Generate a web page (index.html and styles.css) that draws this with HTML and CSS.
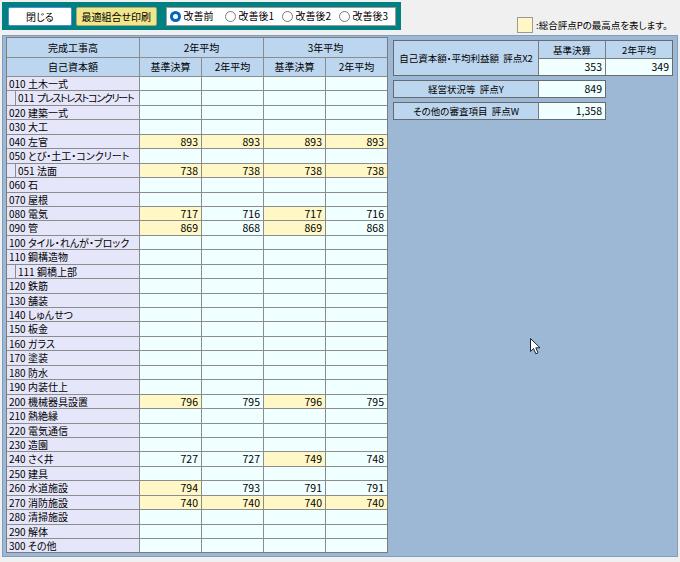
FILE: index.html
```html
<!DOCTYPE html>
<html lang="ja">
<head>
<meta charset="utf-8">
<title>完成工事高</title>
<link rel="stylesheet" href="styles.css">
</head>
<body>
<div class="app">
  <div class="top">
    <div class="toolbar">
      <button class="btn btn-close">閉じる</button>
      <button class="btn btn-print">最適組合せ印刷</button>
      <div class="radios">
        <span class="radio"><span class="dot on"></span>改善前</span>
        <span class="radio"><span class="dot"></span>改善後1</span>
        <span class="radio"><span class="dot"></span>改善後2</span>
        <span class="radio"><span class="dot"></span>改善後3</span>
      </div>
    </div>
    <div class="legend"><span class="swatch"></span><span class="legend-text">:総合評点Pの最高点を表します。</span></div>
  </div>

  <div class="panel">
    <div class="grid">
      <div class="h">完成工事高</div>
      <div class="h span2">2年平均</div>
      <div class="h span2">3年平均</div>
      <div class="h">自己資本額</div>
      <div class="h">基準決算</div>
      <div class="h">2年平均</div>
      <div class="h">基準決算</div>
      <div class="h">2年平均</div>

      <div class="lb">010 土木一式</div><div class="v"></div><div class="v"></div><div class="v"></div><div class="v"></div>
      <div class="lb sub"><span class="box">011 <span class="tight">プレストレストコンクリート</span></span></div><div class="v"></div><div class="v"></div><div class="v"></div><div class="v"></div>
      <div class="lb">020 建築一式</div><div class="v"></div><div class="v"></div><div class="v"></div><div class="v"></div>
      <div class="lb">030 大工</div><div class="v"></div><div class="v"></div><div class="v"></div><div class="v"></div>
      <div class="lb">040 左官</div><div class="v y">893</div><div class="v y">893</div><div class="v y">893</div><div class="v y">893</div>
      <div class="lb">050 とび・土工・コンクリート</div><div class="v"></div><div class="v"></div><div class="v"></div><div class="v"></div>
      <div class="lb sub"><span class="box">051 法面</span></div><div class="v y">738</div><div class="v y">738</div><div class="v y">738</div><div class="v y">738</div>
      <div class="lb">060 石</div><div class="v"></div><div class="v"></div><div class="v"></div><div class="v"></div>
      <div class="lb">070 屋根</div><div class="v"></div><div class="v"></div><div class="v"></div><div class="v"></div>
      <div class="lb">080 電気</div><div class="v y">717</div><div class="v">716</div><div class="v y">717</div><div class="v">716</div>
      <div class="lb">090 管</div><div class="v y">869</div><div class="v">868</div><div class="v y">869</div><div class="v">868</div>
      <div class="lb">100 タイル・れんが・ブロック</div><div class="v"></div><div class="v"></div><div class="v"></div><div class="v"></div>
      <div class="lb">110 鋼構造物</div><div class="v"></div><div class="v"></div><div class="v"></div><div class="v"></div>
      <div class="lb sub"><span class="box">111 鋼橋上部</span></div><div class="v"></div><div class="v"></div><div class="v"></div><div class="v"></div>
      <div class="lb">120 鉄筋</div><div class="v"></div><div class="v"></div><div class="v"></div><div class="v"></div>
      <div class="lb">130 舗装</div><div class="v"></div><div class="v"></div><div class="v"></div><div class="v"></div>
      <div class="lb">140 しゅんせつ</div><div class="v"></div><div class="v"></div><div class="v"></div><div class="v"></div>
      <div class="lb">150 板金</div><div class="v"></div><div class="v"></div><div class="v"></div><div class="v"></div>
      <div class="lb">160 ガラス</div><div class="v"></div><div class="v"></div><div class="v"></div><div class="v"></div>
      <div class="lb">170 塗装</div><div class="v"></div><div class="v"></div><div class="v"></div><div class="v"></div>
      <div class="lb">180 防水</div><div class="v"></div><div class="v"></div><div class="v"></div><div class="v"></div>
      <div class="lb">190 内装仕上</div><div class="v"></div><div class="v"></div><div class="v"></div><div class="v"></div>
      <div class="lb">200 機械器具設置</div><div class="v y">796</div><div class="v">795</div><div class="v y">796</div><div class="v">795</div>
      <div class="lb">210 熱絶縁</div><div class="v"></div><div class="v"></div><div class="v"></div><div class="v"></div>
      <div class="lb">220 電気通信</div><div class="v"></div><div class="v"></div><div class="v"></div><div class="v"></div>
      <div class="lb">230 造園</div><div class="v"></div><div class="v"></div><div class="v"></div><div class="v"></div>
      <div class="lb">240 さく井</div><div class="v">727</div><div class="v">727</div><div class="v y">749</div><div class="v">748</div>
      <div class="lb">250 建具</div><div class="v"></div><div class="v"></div><div class="v"></div><div class="v"></div>
      <div class="lb">260 水道施設</div><div class="v y">794</div><div class="v">793</div><div class="v">791</div><div class="v">791</div>
      <div class="lb">270 消防施設</div><div class="v y">740</div><div class="v y">740</div><div class="v y">740</div><div class="v y">740</div>
      <div class="lb">280 清掃施設</div><div class="v"></div><div class="v"></div><div class="v"></div><div class="v"></div>
      <div class="lb">290 解体</div><div class="v"></div><div class="v"></div><div class="v"></div><div class="v"></div>
      <div class="lb">300 その他</div><div class="v"></div><div class="v"></div><div class="v"></div><div class="v"></div>
    </div>

    <div class="side">
      <div class="blk blk-x2">
        <div class="sh sh-label">自己資本額・平均利益額&nbsp;&nbsp;評点X2</div>
        <div class="sh">基準決算</div>
        <div class="sh">2年平均</div>
        <div class="sv">353</div>
        <div class="sv">349</div>
      </div>
      <div class="blk">
        <div class="sh">経営状況等&nbsp;&nbsp;評点Y</div>
        <div class="sv">849</div>
      </div>
      <div class="blk">
        <div class="sh">その他の審査項目&nbsp;&nbsp;評点W</div>
        <div class="sv">1,358</div>
      </div>
    </div>

    <svg class="cursor" width="12" height="18" viewBox="0 0 12 18">
      <path d="M0.5 0.5 L0.5 13.5 L3.5 10.5 L5.8 15.8 L8 14.8 L5.8 9.8 L10 9.8 Z" fill="#ffffff" stroke="#1a2430" stroke-width="1" stroke-linejoin="round"/>
    </svg>
  </div>
</div>
</body>
</html>
```

FILE: styles.css
```css
html, body {
  margin: 0;
  padding: 0;
  background: #f0f0f0;
}

body {
  font-family: "Noto Sans CJK JP", "Noto Sans", sans-serif;
  font-feature-settings: "palt";
  color: #000;
  font-size: 10px;
}

.app {
  width: 680px;
  height: 562px;
  padding: 2px 0 0 2px;
  box-sizing: border-box;
}

.top {
  display: flex;
  align-items: flex-start;
  height: 28px;
}

.toolbar {
  width: 399px;
  height: 28px;
  box-sizing: border-box;
  background: #008080;
  display: flex;
  align-items: center;
  padding: 0 5px 0 6px;
}

.btn {
  font-family: inherit;
  font-feature-settings: "palt";
  font-size: 10px;
  height: 19px;
  padding: 0;
  margin: 0;
  line-height: 17px;
  color: #000;
  border-radius: 2px;
  cursor: default;
}

.btn-close {
  width: 64px;
  background: #ffffff;
  border: 1px solid #4f8fd6;
}

.btn-print {
  width: 81px;
  margin-left: 4px;
  background: #f0e68c;
  border: 1px solid #b0a870;
}

.radios {
  margin-left: 9px;
  width: 231px;
  height: 19px;
  box-sizing: border-box;
  background: #ffffff;
  border: 1px solid #9a9a9a;
  display: flex;
  align-items: center;
  padding-left: 3px;
  overflow: hidden;
}

.radio {
  flex: none;
  width: 57px;
  display: flex;
  align-items: center;
  font-size: 10px;
  line-height: 12px;
  white-space: nowrap;
}

.radio:first-child {
  width: 55px;
}

.dot {
  flex: none;
  width: 11px;
  height: 11px;
  box-sizing: border-box;
  border-radius: 50%;
  border: 1px solid #7a7a7a;
  background: #fff;
  margin-right: 3px;
  position: relative;
}

.dot.on {
  border: none;
  background: #0067c0;
}

.dot.on::after {
  content: "";
  position: absolute;
  left: 3px;
  top: 3px;
  width: 5px;
  height: 5px;
  border-radius: 50%;
  background: #fff;
}

.legend {
  margin-left: 116px;
  margin-top: 15px;
  display: flex;
  align-items: center;
}

.swatch {
  width: 16px;
  height: 16px;
  box-sizing: border-box;
  background: #fff8c6;
  border: 1px solid #9a9a9a;
}

.legend-text {
  margin-left: 3px;
  font-size: 9.5px;
  line-height: 12px;
}

.panel {
  position: relative;
  margin-top: 5px;
  width: 676px;
  height: 522px;
  box-sizing: border-box;
  background: #9db8d4;
  border: 1px solid #7f9dbc;
  padding: 1px 0 0 3px;
  display: flex;
  align-items: flex-start;
}

.grid {
  display: grid;
  grid-template-columns: 132px repeat(4, 61px);
  grid-template-rows: 19px 18px repeat(33, 13.45px);
  gap: 1px;
  background: #8c8c8c;
  border: 1px solid #7c7c7c;
}

.h {
  background: #bdd6ef;
  display: flex;
  align-items: center;
  justify-content: center;
  font-size: 10px;
  line-height: 12px;
}

.span2 {
  grid-column: span 2;
}

.lb {
  background: #e6e6fa;
  font-size: 10px;
  line-height: 13px;
  padding-left: 2px;
  white-space: nowrap;
  overflow: hidden;
}

.lb.sub {
  padding-left: 8px;
}

.box {
  display: block;
  height: 100%;
  border-left: 1px solid #8c8c8c;
  padding-left: 2px;
}

.tight {
  letter-spacing: -1.3px;
}

.v {
  background: #f0ffff;
  text-align: right;
  padding-right: 3px;
  font-size: 10.5px;
  line-height: 13px;
}

.v.y {
  background: #fff8c6;
}

.side {
  margin-left: 5px;
  margin-top: 3px;
  display: flex;
  flex-direction: column;
  gap: 4px;
}

.blk {
  display: grid;
  grid-template-columns: 144px 66px;
  grid-template-rows: 16px;
  gap: 1px;
  background: #7a7a7a;
  border: 1px solid #6a6a6a;
  align-self: flex-start;
}

.blk-x2 {
  grid-template-columns: 144px 66px 66px;
  grid-template-rows: 17px 16px;
}

.sh {
  background: #bdd6ef;
  display: flex;
  align-items: center;
  justify-content: center;
  font-size: 9.5px;
  line-height: 12px;
  white-space: nowrap;
}

.sh-label {
  grid-row: span 2;
}

.sv {
  background: #f0ffff;
  text-align: right;
  padding-right: 3px;
  font-size: 10.5px;
  line-height: 16px;
}

.cursor {
  position: absolute;
  left: 527px;
  top: 302px;
}
```
